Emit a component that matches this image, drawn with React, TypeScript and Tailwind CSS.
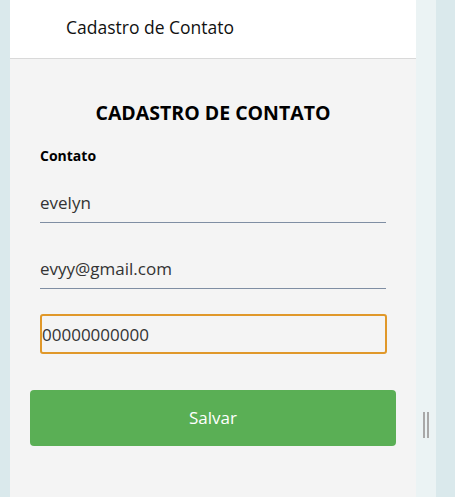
export default function App() {
  return (
    <div
      className="flex h-[497px] w-[455px] bg-[#dae9ec]"
      style={{ fontFamily: '"Open Sans", "Noto Sans", sans-serif' }}
    >
      <div className="w-[10px] shrink-0" />
      <main className="flex w-[406px] shrink-0 flex-col bg-[#f4f4f4]">
        <header className="flex h-[59px] items-center border-b border-[#d9d9d9] bg-white pb-[4px] pl-[56px]">
          <h1 className="text-[17.5px] text-[#111]">Cadastro de Contato</h1>
        </header>

        <form className="flex flex-col px-[20px] pt-[42px]" onSubmit={(e) => e.preventDefault()}>
          <h2 className="text-center text-[19.5px] font-bold leading-[24px] text-black">CADASTRO DE CONTATO</h2>
          <label className="mt-[20px] px-[10px] text-[14px] font-bold text-black">Contato</label>

          <div className="flex flex-col px-[10px]">
            <input
              defaultValue="evelyn"
              className="mt-[17px] h-[40px] w-[346px] border-b border-[#7f8ea3] bg-transparent text-[17px] text-[#333] outline-none"
            />
            <input
              defaultValue="evyy@gmail.com"
              className="mt-[26px] h-[40px] w-[346px] border-b border-[#7f8ea3] bg-transparent text-[17px] text-[#333] outline-none"
            />
            <input
              defaultValue="00000000000"
              className="mt-[25px] h-[40px] w-[347px] rounded-[3px] border-2 border-[#e0982a] bg-transparent text-[17px] text-[#333] outline-none"
            />
          </div>

          <button className="mt-[36px] h-[56px] w-[366px] rounded-[4px] bg-[#5aaf55] text-[17px] text-white">
            Salvar
          </button>
        </form>
      </main>
      <div className="flex w-[20px] shrink-0 items-start justify-center gap-[2px] bg-[#ebf3f4] pt-[412px]">
        <span className="h-[26px] w-[2px] bg-[#a8a8a8]" />
        <span className="h-[26px] w-[2px] bg-[#a8a8a8]" />
      </div>
    </div>
  );
}
